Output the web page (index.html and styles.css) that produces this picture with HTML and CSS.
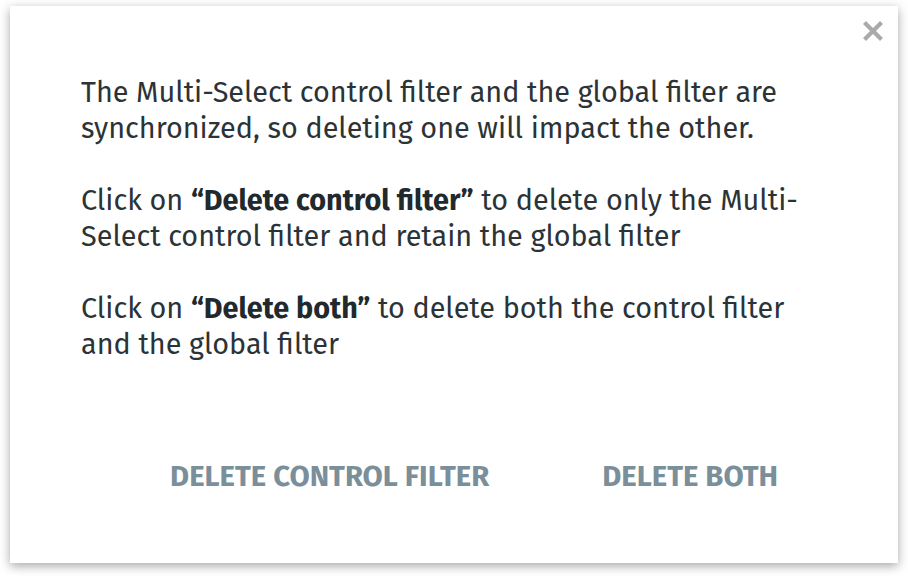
FILE: index.html
```html
<!DOCTYPE html>
<html>
<head>
<meta charset="utf-8">
<link rel="stylesheet" href="styles.css">
</head>
<body>
<div class="dialog">
  <button class="close" aria-label="Close">
    <svg width="22" height="22" viewBox="0 0 22 22"><path d="M2.5 2.5 L19.5 19.5 M19.5 2.5 L2.5 19.5" stroke="#aaaaaa" stroke-width="4.2" stroke-linecap="butt"/></svg>
  </button>
  <div class="content">
    <p>The Multi-Select control filter and the global filter are synchronized, so deleting one will impact the other.</p>
    <p>Click on <b>“Delete control filter”</b> to delete only the Multi-Select control filter and retain the global filter</p>
    <p>Click on <b>“Delete both”</b> to delete both the control filter and the global filter</p>
  </div>
  <div class="actions">
    <button class="btn">DELETE CONTROL FILTER</button>
    <button class="btn">DELETE BOTH</button>
  </div>
</div>
</body>
</html>
```
FILE: styles.css
```css
html, body { margin: 0; padding: 0; background: #fff; }
body { padding: 6px 10px 13px 10px; font-family: "Fira Sans", "Open Sans", sans-serif; }
.dialog {
  position: relative;
  width: 888px;
  height: 557px;
  background: #fff;
  box-shadow: 0 3px 10px rgba(0,0,0,0.35);
  box-sizing: border-box;
  padding: 69px 70px 0 71px;
  display: flex;
  flex-direction: column;
}
.close {
  position: absolute;
  top: 14px;
  right: 14px;
  background: none;
  border: 0;
  padding: 0;
  width: 22px;
  height: 22px;
}
.close svg { display: block; }
.content p {
  margin: 0 0 36px 0;
  font-size: 28.8px;
  line-height: 36px;
  color: #2b3337;
}
.content b { font-weight: 700; color: #22292d; }
.actions {
  margin-top: auto;
  margin-bottom: 68px;
  display: flex;
  justify-content: flex-end;
  gap: 113px;
  padding-right: 50px;
}
.btn {
  background: none;
  border: 0;
  padding: 0;
  font-family: "Fira Sans", "Open Sans", sans-serif;
  font-weight: 700;
  font-size: 29.3px;
  color: #7b8f9a;
  line-height: 36px;
}
```
